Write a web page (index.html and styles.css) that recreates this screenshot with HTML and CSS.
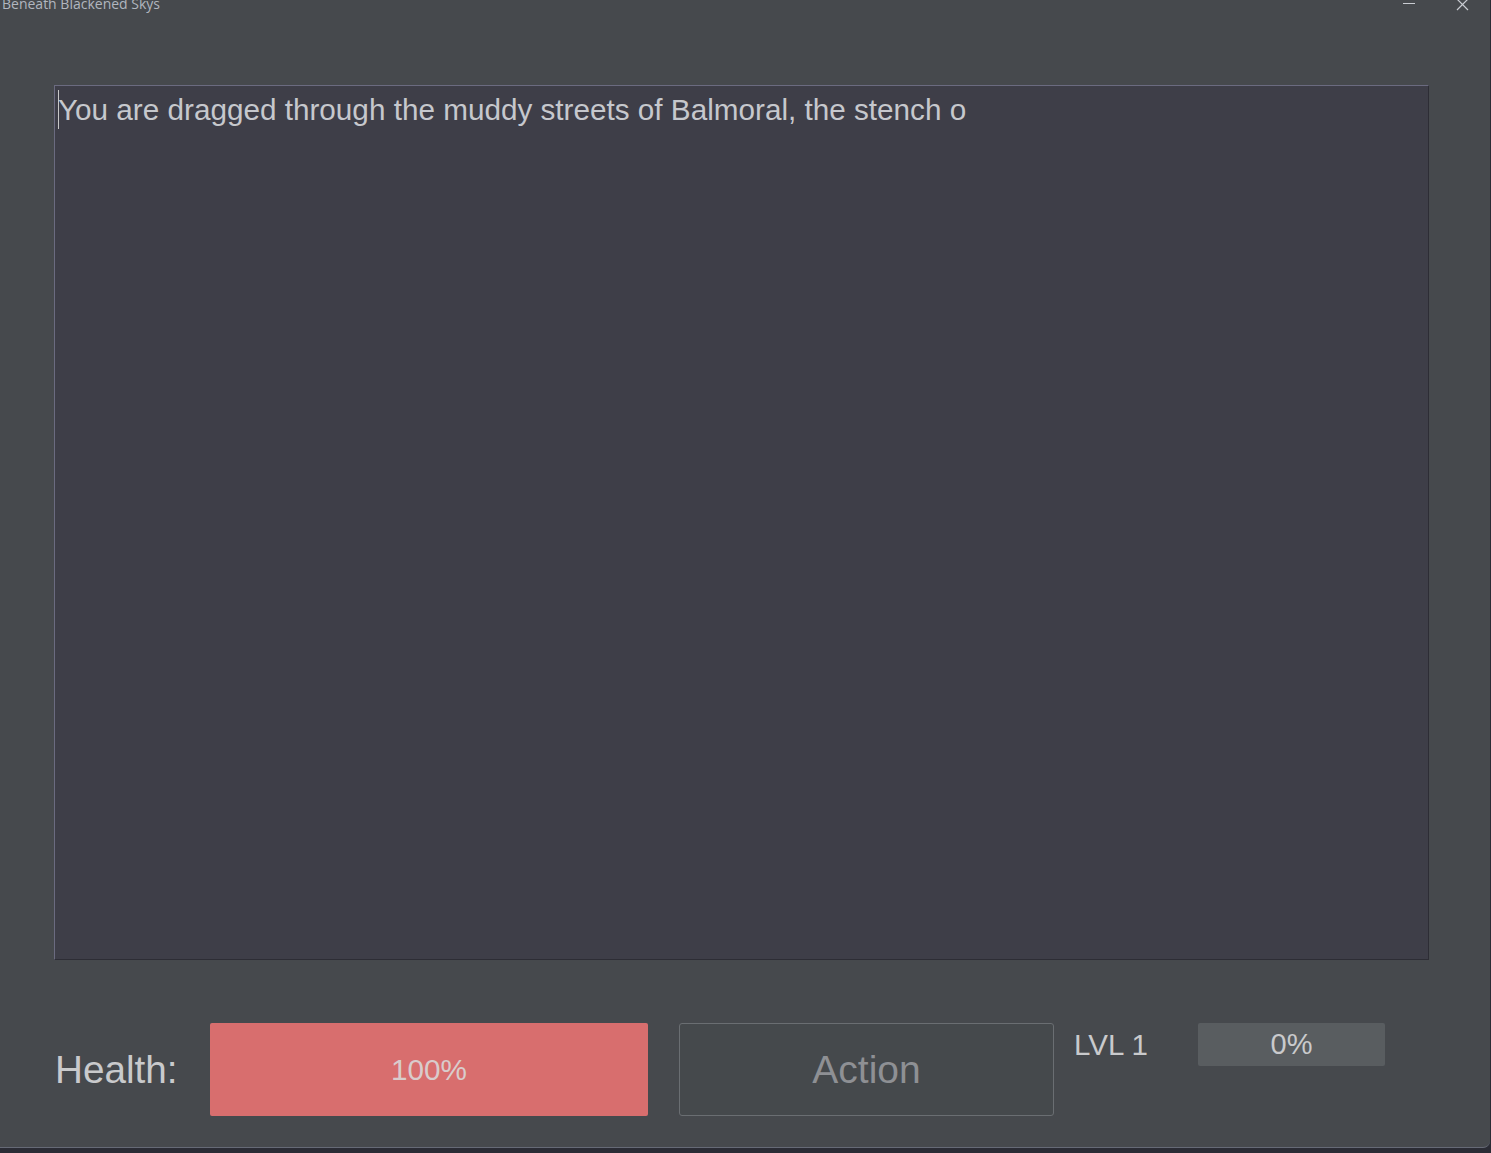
FILE: index.html
```html
<!DOCTYPE html>
<html>
<head>
<meta charset="utf-8">
<title>Beneath Blackened Skys</title>
<link rel="stylesheet" href="styles.css">
</head>
<body>
<div class="window">
  <div class="titlebar">
    <span class="title">Beneath Blackened Skys</span>
    <div class="controls">
      <span class="ctl min"><svg width="14" height="10" viewBox="0 0 14 10"><line x1="1" y1="3.5" x2="13" y2="3.5" stroke="#c9ccd2" stroke-width="1"/></svg></span>
      <span class="ctl close"><svg width="14" height="12" viewBox="0 0 14 12"><path d="M1 0 L12 11 M12 0 L1 11" stroke="#c9ccd2" stroke-width="1.2" fill="none"/></svg></span>
    </div>
  </div>
  <div class="main">
    <div class="story"><span class="caret"></span>You are dragged through the muddy streets of Balmoral, the stench o</div>
  </div>
  <div class="statusbar">
    <span class="label health-label">Health:</span>
    <div class="bar health-bar">100%</div>
    <button class="action">Action</button>
    <span class="label lvl">LVL 1</span>
    <div class="bar xp-bar">0%</div>
  </div>
</div>
</body>
</html>
```

FILE: styles.css
```css
html, body {
  margin: 0;
  padding: 0;
}
body {
  width: 1491px;
  height: 1153px;
  overflow: hidden;
  background: #2b2c35;
  font-family: "Liberation Sans", Arial, sans-serif;
}
.window {
  width: 1490px;
  height: 1147px;
  background: #46494d;
  border-bottom: 1px solid #666a76;
  border-bottom-right-radius: 7px;
  display: flex;
  flex-direction: column;
  overflow: hidden;
}
.titlebar {
  height: 14px;
  display: flex;
  justify-content: space-between;
}
.title {
  font-family: "Open Sans", "Noto Sans", sans-serif;
  font-size: 14px;
  line-height: 14px;
  color: #b1b6bf;
  margin-top: -3px;
  margin-left: 2px;
}
.controls {
  display: flex;
  gap: 40px;
  margin-right: 20px;
}
.ctl {
  display: block;
  height: 12px;
}
.min svg { display: block; margin-top: 0; }
.close svg { display: block; margin-top: -1px; }
.main {
  padding: 71px 0 0 54px;
}
.story {
  width: 1375px;
  height: 875px;
  box-sizing: border-box;
  background: #3e3e48;
  border-top: 1px solid #6b6b80;
  border-left: 1px solid #6b6b80;
  border-right: 1px solid #2d2d35;
  border-bottom: 1px solid #2d2d35;
  padding: 4px 0 0 3px;
  font-size: 29.7px;
  line-height: 39px;
  color: #c6c8cd;
}
.caret {
  display: inline-block;
  width: 1px;
  height: 39px;
  background: #c8c8c8;
  vertical-align: top;
  margin-right: -1px;
}
.statusbar {
  display: flex;
  align-items: flex-start;
  margin-top: 63px;
  padding-left: 55px;
}
.label {
  color: #c9cacc;
}
.health-label {
  font-size: 38.7px;
  width: 155px;
  line-height: 93px;
}
.bar {
  text-align: center;
  border-radius: 2px;
}
.health-bar {
  width: 438px;
  height: 93px;
  line-height: 93px;
  background: #d86e6e;
  font-size: 29.7px;
  color: #d9cccc;
}
.action {
  margin-left: 31px;
  width: 375px;
  height: 93px;
  background: #45494c;
  border: 1px solid #6a6e72;
  border-radius: 3px;
  color: #8e9094;
  font-family: "Liberation Sans", Arial, sans-serif;
  font-size: 39px;
  padding: 0;
}
.lvl {
  margin-left: 20px;
  width: 124px;
  font-size: 29.5px;
  line-height: 43px;
}
.xp-bar {
  width: 187px;
  height: 43px;
  line-height: 43px;
  background: #595d60;
  font-size: 29px;
  color: #c9cacc;
}
```
